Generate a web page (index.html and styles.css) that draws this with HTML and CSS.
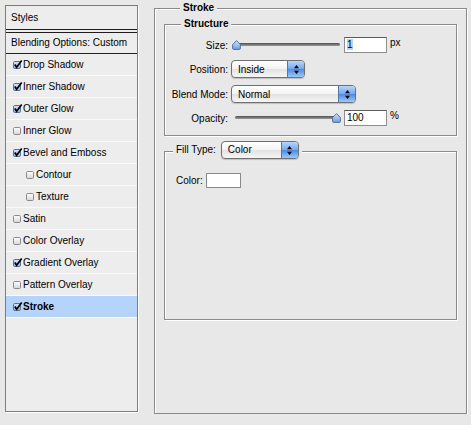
FILE: index.html
```html
<!DOCTYPE html>
<html lang="en">
<head>
  <meta charset="UTF-8">
  <title>Layer Style – Stroke</title>
  <link rel="stylesheet" href="styles.css">
</head>
<body>
  <svg class="defs" width="0" height="0">
    <defs>
      <linearGradient id="boxFill" x1="0" y1="0" x2="0" y2="1">
        <stop offset="0" stop-color="#ffffff"/>
        <stop offset="1" stop-color="#d6d6d6"/>
      </linearGradient>
      <linearGradient id="boxOn" x1="0" y1="0" x2="0" y2="1">
        <stop offset="0" stop-color="#d9e7fb"/>
        <stop offset="1" stop-color="#8fb1e4"/>
      </linearGradient>
      <linearGradient id="thumbFill" x1="0" y1="0" x2="0" y2="1">
        <stop offset="0" stop-color="#d3e5fb"/>
        <stop offset="1" stop-color="#6c9edf"/>
      </linearGradient>
    </defs>
  </svg>

  <div class="window">
    <div class="styles-panel">
      <div class="panel-head">Styles</div>
      <div class="panel-blend">Blending Options: Custom</div>
      <ul class="style-list">
        <li class="style-item"><svg class="check" width="10" height="10" viewBox="0 0 10 10"><rect x="0.5" y="1.5" width="7" height="7" rx="1.2" fill="url(#boxOn)" stroke="#55709b"/><path d="M1.8 4.6 L3.6 7.2 L8.7 0.4" fill="none" stroke="#000" stroke-width="1.7"/></svg>Drop Shadow</li>
        <li class="style-item"><svg class="check" width="10" height="10" viewBox="0 0 10 10"><rect x="0.5" y="1.5" width="7" height="7" rx="1.2" fill="url(#boxOn)" stroke="#55709b"/><path d="M1.8 4.6 L3.6 7.2 L8.7 0.4" fill="none" stroke="#000" stroke-width="1.7"/></svg>Inner Shadow</li>
        <li class="style-item"><svg class="check" width="10" height="10" viewBox="0 0 10 10"><rect x="0.5" y="1.5" width="7" height="7" rx="1.2" fill="url(#boxOn)" stroke="#55709b"/><path d="M1.8 4.6 L3.6 7.2 L8.7 0.4" fill="none" stroke="#000" stroke-width="1.7"/></svg>Outer Glow</li>
        <li class="style-item"><svg class="check" width="10" height="10" viewBox="0 0 10 10"><rect x="0.5" y="1.5" width="7" height="7" rx="1.2" fill="url(#boxFill)" stroke="#8b8b8b"/></svg>Inner Glow</li>
        <li class="style-item"><svg class="check" width="10" height="10" viewBox="0 0 10 10"><rect x="0.5" y="1.5" width="7" height="7" rx="1.2" fill="url(#boxOn)" stroke="#55709b"/><path d="M1.8 4.6 L3.6 7.2 L8.7 0.4" fill="none" stroke="#000" stroke-width="1.7"/></svg>Bevel and Emboss</li>
        <li class="style-item sub"><svg class="check" width="10" height="10" viewBox="0 0 10 10"><rect x="0.5" y="1.5" width="7" height="7" rx="1.2" fill="url(#boxFill)" stroke="#8b8b8b"/></svg>Contour</li>
        <li class="style-item sub"><svg class="check" width="10" height="10" viewBox="0 0 10 10"><rect x="0.5" y="1.5" width="7" height="7" rx="1.2" fill="url(#boxFill)" stroke="#8b8b8b"/></svg>Texture</li>
        <li class="style-item"><svg class="check" width="10" height="10" viewBox="0 0 10 10"><rect x="0.5" y="1.5" width="7" height="7" rx="1.2" fill="url(#boxFill)" stroke="#8b8b8b"/></svg>Satin</li>
        <li class="style-item"><svg class="check" width="10" height="10" viewBox="0 0 10 10"><rect x="0.5" y="1.5" width="7" height="7" rx="1.2" fill="url(#boxFill)" stroke="#8b8b8b"/></svg>Color Overlay</li>
        <li class="style-item"><svg class="check" width="10" height="10" viewBox="0 0 10 10"><rect x="0.5" y="1.5" width="7" height="7" rx="1.2" fill="url(#boxOn)" stroke="#55709b"/><path d="M1.8 4.6 L3.6 7.2 L8.7 0.4" fill="none" stroke="#000" stroke-width="1.7"/></svg>Gradient Overlay</li>
        <li class="style-item"><svg class="check" width="10" height="10" viewBox="0 0 10 10"><rect x="0.5" y="1.5" width="7" height="7" rx="1.2" fill="url(#boxFill)" stroke="#8b8b8b"/></svg>Pattern Overlay</li>
        <li class="style-item selected"><svg class="check" width="10" height="10" viewBox="0 0 10 10"><rect x="0.5" y="1.5" width="7" height="7" rx="1.2" fill="url(#boxOn)" stroke="#55709b"/><path d="M1.8 4.6 L3.6 7.2 L8.7 0.4" fill="none" stroke="#000" stroke-width="1.7"/></svg>Stroke</li>
      </ul>
    </div>

    <div class="frame frame-main">
      <div class="frame-title">Stroke</div>

      <div class="frame frame-structure">
        <div class="frame-title">Structure</div>
        <div class="form-grid">
          <div class="field-label">Size:</div>
          <div class="field">
            <div class="slider">
              <div class="track"></div>
              <svg class="thumb thumb-min" width="9" height="10" viewBox="0 0 9 10"><path d="M4.5 0.6 L8.4 4.6 V8.4 Q8.4 9.4 7.4 9.4 H1.6 Q0.6 9.4 0.6 8.4 V4.6 Z" fill="url(#thumbFill)" stroke="#46689a" stroke-width="0.9"/></svg>
            </div>
            <span class="num-input"><span class="text-sel">1</span></span>
            <span class="unit">px</span>
          </div>

          <div class="field-label">Position:</div>
          <div class="field">
            <div class="popup popup-position">
              <span class="popup-text">Inside</span>
              <span class="popup-arrows"><svg width="7" height="11" viewBox="0 0 7 11"><path d="M3.5 1 L6 4.2 H1 Z M3.5 10 L6 6.8 H1 Z" fill="#000"/></svg></span>
            </div>
          </div>

          <div class="field-label">Blend Mode:</div>
          <div class="field">
            <div class="popup popup-blend">
              <span class="popup-text">Normal</span>
              <span class="popup-arrows"><svg width="7" height="11" viewBox="0 0 7 11"><path d="M3.5 1 L6 4.2 H1 Z M3.5 10 L6 6.8 H1 Z" fill="#000"/></svg></span>
            </div>
          </div>

          <div class="field-label">Opacity:</div>
          <div class="field">
            <div class="slider">
              <div class="track"></div>
              <svg class="thumb thumb-max" width="9" height="10" viewBox="0 0 9 10"><path d="M4.5 0.6 L8.4 4.6 V8.4 Q8.4 9.4 7.4 9.4 H1.6 Q0.6 9.4 0.6 8.4 V4.6 Z" fill="url(#thumbFill)" stroke="#46689a" stroke-width="0.9"/></svg>
            </div>
            <span class="num-input">100</span>
            <span class="unit">%</span>
          </div>
        </div>
      </div>

      <div class="frame frame-fill">
        <div class="frame-title fill-title">
          <span>Fill Type:</span>
          <div class="popup popup-fill">
            <span class="popup-text">Color</span>
            <span class="popup-arrows"><svg width="7" height="11" viewBox="0 0 7 11"><path d="M3.5 1 L6 4.2 H1 Z M3.5 10 L6 6.8 H1 Z" fill="#000"/></svg></span>
          </div>
        </div>
        <div class="color-row">
          <span>Color:</span>
          <span class="swatch"></span>
        </div>
      </div>
    </div>
  </div>
</body>
</html>
```

FILE: styles.css
```css
body {
  margin: 0;
  background: #e8e8e8;
  font-family: "Liberation Sans", Arial, sans-serif;
  font-size: 10px;
  color: #000;
}
.defs {
  position: absolute;
  width: 0;
  height: 0;
}
.window {
  display: flex;
  align-items: flex-start;
  padding-left: 5px;
}

/* left list of styles */
.styles-panel {
  margin-top: 5px;
  width: 133px;
  height: 407px;
  box-sizing: border-box;
  border: 1px solid #7d7d7d;
  background: #ededed;
  box-shadow: 1px 1px 0 #fff;
}
.panel-head {
  height: 23px;
  line-height: 23px;
  padding-left: 5px;
  border-bottom: 4px double #1e1e1e;
}
.panel-blend {
  height: 20px;
  line-height: 20px;
  padding-left: 5px;
  border-bottom: 1px solid #222;
}
.style-list {
  list-style: none;
  margin: 0;
  padding: 0;
}
.style-item {
  display: flex;
  align-items: center;
  height: 21px;
  padding-left: 7px;
  border-bottom: 1px solid #fafafa;
}
.style-item.sub {
  padding-left: 20px;
}
.style-item.selected {
  background: #b5d4fc;
  font-weight: bold;
}
.check {
  flex: none;
  margin-right: 0;
  overflow: visible;
}

/* etched group frames */
.frame {
  border: 1px solid #8b8b8b;
  box-shadow: inset 1px 1px 0 #fff, 1px 1px 0 #fff;
}
.frame-title {
  width: max-content;
  margin: -7px 0 0 16px;
  padding: 0 3px;
  background: #e8e8e8;
  line-height: 12px;
  font-weight: bold;
}
.frame-main {
  margin-left: 16px;
  margin-top: 8px;
  width: 313px;
  height: 406px;
  box-sizing: border-box;
  padding: 0 9px;
}
.frame-structure {
  margin-top: 10px;
  padding-bottom: 9px;
}
.form-grid {
  display: grid;
  grid-template-columns: 63px auto;
  column-gap: 3px;
  row-gap: 7px;
  align-items: center;
  margin-top: 7px;
}
.field-label {
  text-align: right;
}
.field {
  display: flex;
  align-items: center;
}

/* slider */
.slider {
  position: relative;
  width: 105px;
  height: 16px;
  margin-left: 4px;
}
.track {
  margin-top: 6px;
  height: 3px;
  border-radius: 2px;
  background: linear-gradient(#4e4e4e, #9c9c9c);
}
.thumb {
  position: absolute;
  top: 3px;
}
.thumb-min {
  left: -3px;
}
.thumb-max {
  left: 97px;
}

.num-input {
  width: 43px;
  height: 16px;
  box-sizing: border-box;
  margin-left: 4px;
  padding-left: 2px;
  border: 1px solid #8e8e8e;
  border-top-color: #5c5c5c;
  background: #fff;
  line-height: 14px;
}
.text-sel {
  background: #b5d4fc;
}
.unit {
  align-self: flex-start;
  margin-left: 3px;
  line-height: 12px;
}

/* aqua pop-up buttons */
.popup {
  display: flex;
  align-items: center;
  height: 18px;
  box-sizing: border-box;
  border: 1px solid #707070;
  border-radius: 4px;
  background: linear-gradient(#ffffff, #f3f3f3 50%, #e2e2e2 52%, #f6f6f6);
  box-shadow: 0 1px 1px rgba(0, 0, 0, 0.18);
  font-weight: normal;
}
.popup-text {
  padding-left: 6px;
}
.popup-arrows {
  display: flex;
  align-items: center;
  justify-content: center;
  align-self: stretch;
  margin-left: auto;
  width: 16px;
  border-left: 1px solid #5277b0;
  border-radius: 0 3px 3px 0;
  background: linear-gradient(#b8d6fa, #72a8ee 50%, #4c8ce6 52%, #9cc8f8);
}
.popup-position {
  width: 74px;
}
.popup-blend {
  width: 125px;
}
.popup-fill {
  width: 78px;
}

/* fill type group */
.frame-fill {
  margin-top: 15px;
  height: 169px;
  box-sizing: border-box;
}
.fill-title {
  display: flex;
  align-items: center;
  gap: 5px;
  margin: -11px 0 0 8px;
  line-height: 18px;
  font-weight: normal;
}
.color-row {
  display: flex;
  align-items: center;
  gap: 3px;
  margin-top: 14px;
  padding-left: 11px;
}
.swatch {
  width: 35px;
  height: 15px;
  box-sizing: border-box;
  border: 1px solid #8a8a8a;
  background: #fff;
}
```
